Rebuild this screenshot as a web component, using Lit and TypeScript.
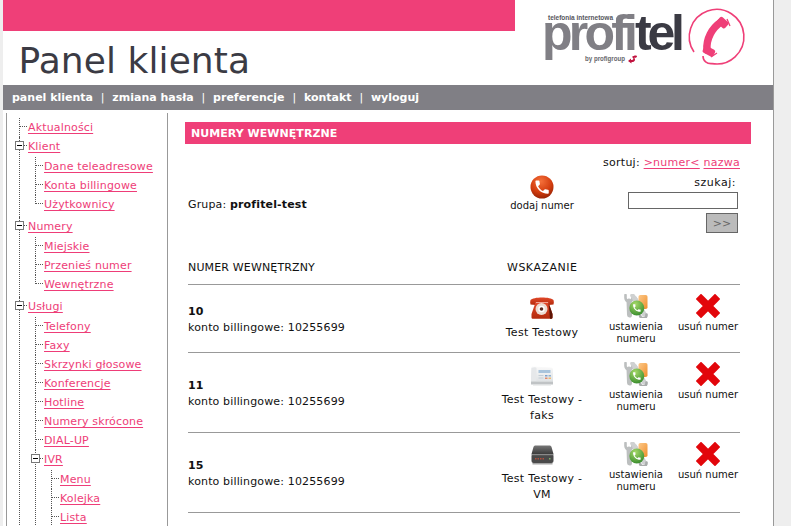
import { LitElement, html, css } from "lit";
import { customElement } from "lit/decorators.js";

const HANDSET = "M6.62 10.79c1.44 2.83 3.76 5.14 6.59 6.59l2.2-2.2c.27-.27.67-.36 1.02-.24 1.12.37 2.33.57 3.57.57.55 0 1 .45 1 1V20c0 .55-.45 1-1 1-9.39 0-17-7.61-17-17 0-.55.45-1 1-1h3.5c.55 0 1 .45 1 1 0 1.25.2 2.45.57 3.57.11.35.03.74-.25 1.02l-2.2 2.2z";

const iconCall = html`<svg width="24" height="24" viewBox="0 0 24 24">
  <defs><radialGradient id="cg" cx="45%" cy="25%" r="80%"><stop offset="0" stop-color="#f5703a"/><stop offset=".6" stop-color="#d23c0e"/><stop offset="1" stop-color="#8f2004"/></radialGradient></defs>
  <circle cx="12" cy="12" r="11.5" fill="url(#cg)"/>
  <path d="${HANDSET}" transform="translate(3.2 3.2) scale(.74)" fill="#fff"/>
</svg>`;

const iconRedPhone = html`<svg width="24" height="23" viewBox="0 0 24 23">
  <defs><linearGradient id="rg" x1="0" y1="0" x2="0" y2="1"><stop offset="0" stop-color="#e2492a"/><stop offset="1" stop-color="#b32a0c"/></linearGradient></defs>
  <path d="M.5 4C3 .5 21 .5 23.500 4c.5 1.500.5 3 0 4.500l-5 .5-.5-3H6l-.5 3-5-.5C0 7 0 5.500.5 4z" fill="url(#rg)"/>
  <path d="M5.500 6.500h13l4 11.500v3.500c0 .8-.7 1.300-1.500 1.300H3c-.8 0-1.500-.5-1.500-1.300V18z" fill="url(#rg)"/>
  <path d="M18.500 6.500l4 11.500v3.500c0 .8-.7 1.300-1.500 1.300h-1z" fill="#5c1405"/>
  <circle cx="11.500" cy="13" r="6" fill="#ecdcd2"/><circle cx="11.500" cy="13" r="3.200" fill="#fff"/><circle cx="11.500" cy="13" r="1.800" fill="#5a2a20"/>
</svg>`;

const iconFax = html`<svg width="24" height="21" viewBox="0 0 24 21">
  <defs><linearGradient id="fg" x1="0" y1="0" x2="0" y2="1"><stop offset="0" stop-color="#fafafa"/><stop offset="1" stop-color="#dfe2e4"/></linearGradient></defs>
  <path d="M1 3.500C1 2 2 1.500 3 1.500l18 1c1 0 2 1 2 2v12H1z" fill="url(#fg)"/>
  <path d="M1.500 3C4 2 6 2 6.500 3v13.500h-5.500z" fill="#e6e8ea"/>
  <rect x="8.500" y="5" width="12" height="3" fill="#a9c4dc"/>
  <path d="M8.500 10h5v1h-5zm0 2.500h5v1h-5z" fill="#c3cdd6"/>
  <path d="M15 10h2.500v1.500H15z" fill="#7aa0cc"/><path d="M18.500 10H21v1.500h-2.500z" fill="#90b0d0"/>
  <path d="M15 12.500h2.500V14H15z" fill="#e08a70"/><path d="M18.500 12.500H21V14h-2.500z" fill="#eebb70"/>
  <rect x="1" y="16.500" width="22" height="3" fill="#c0c3c5"/><rect x="3" y="19.500" width="18" height="1" fill="#dedfe0"/>
</svg>`;

const iconVm = html`<svg width="23" height="20" viewBox="0 0 23 20">
  <defs><linearGradient id="vg" x1="0" y1="0" x2="0" y2="1"><stop offset="0" stop-color="#777"/><stop offset="1" stop-color="#3c3c3c"/></linearGradient></defs>
  <path d="M4.500 .5h14c1 0 1.500.5 2 1.500L22.500 9h-22L2.500 2c.5-1 1-1.500 2-1.500z" fill="url(#vg)"/>
  <rect x=".5" y="9" width="22" height="9" rx="2" fill="#4a4a4a"/>
  <rect x=".5" y="9" width="22" height="1.200" fill="#8a8a8a"/>
  <path d="M4 13h1.500v1.500H4zm2.500 0H8v1.500H6.500zm2.500 0h1.500v1.500H9zm2.500 0H13v1.500h-1.500z" fill="#b0503f"/><rect x="18" y="13" width="1.500" height="1.500" fill="#7fae6a"/>
  <rect x="1.500" y="18" width="20" height="1.500" fill="#a5a5a5"/>
</svg>`;

const iconSettings = html`<svg width="24" height="24" viewBox="0 0 24 24">
  <defs>
    <linearGradient id="og" x1="0" y1="0" x2="1" y2="1"><stop offset="0" stop-color="#fcc98a"/><stop offset="1" stop-color="#f08e2a"/></linearGradient>
    <radialGradient id="sg" cx="40%" cy="25%" r="80%"><stop offset="0" stop-color="#a6d968"/><stop offset="1" stop-color="#358a2c"/></radialGradient>
  </defs>
  <g fill="none" stroke="#bcbfbf" stroke-linecap="round">
    <path d="M1.500 1v3a3.500 3.500 0 0 0 7 0V1" stroke-width="2.600"/>
    <path d="M5 7l.5 14" stroke-width="5"/>
    <path d="M8.500 1.500l3 4" stroke-width="4.500" stroke="#cfd1d1"/>
    <path d="M11 5l9 15" stroke-width="5" stroke="#cfd1d1"/>
    <path d="M16 21.500a3 3 0 0 0 6.500-1" stroke-width="2.600" stroke="#a9acac"/>
  </g>
  <rect x="14.500" y="1" width="9" height="14" rx="1.800" fill="url(#og)"/>
  <circle cx="12.800" cy="14" r="7.500" fill="url(#sg)"/>
  <path d="${HANDSET}" transform="translate(7.800 9) scale(.42)" fill="#fff"/>
</svg>`;

const iconX = html`<svg width="24" height="24" viewBox="0 0 24 24">
  <path d="M5 5l14 14M19 5L5 19" stroke="#e2060b" stroke-width="7.500" stroke-linecap="square" fill="none"/>
</svg>`;

const logo = html`<svg class="logo" width="258" height="85" viewBox="515 0 258 85">
  <text x="548" y="20" class="lt" textLength="65" lengthAdjust="spacingAndGlyphs">telefonia internetowa</text>
  <text x="542" y="50" class="lp" textLength="96" lengthAdjust="spacing">profi</text>
  <text x="635" y="50" class="ld" textLength="50" lengthAdjust="spacing">tel</text>
  <text x="585" y="61" class="lb" textLength="40" lengthAdjust="spacingAndGlyphs">by profigroup</text>
  <path d="M628 61l3-2.500v1.500c3 0 3-1.500 1-3 2-2 5-2 5-.5-.5 1.500-2 1.500-3 1 2 2 1 5-2.500 4.500v1.500z" fill="#c1133f"/>
  <path d="M694 52A27.300 27.300 0 1 1 712 63.600C707 64 703 61 703 56" fill="none" stroke="#ef3f78" stroke-width="1.600"/>
  <g fill="#ef3f78">
    <path d="M721 22C712 28 706 39 707 50" fill="none" stroke="#ef3f78" stroke-width="7.500" stroke-linecap="round"/>
    <rect x="-6" y="-4" width="11" height="8" rx="2" transform="translate(723 23) rotate(42)"/>
    <rect x="-6" y="-3.500" width="12" height="7.500" rx="2" transform="translate(709 51) rotate(28)"/>
  </g>
  <path d="M727 19l3 7M711 57l6-4" stroke="#ef3f78" stroke-width="1.300" fill="none"/>
</svg>`;

interface TreeNode { label: string; children?: TreeNode[]; more?: boolean }

const TREE: TreeNode[] = [
  { label: "Aktualności" },
  { label: "Klient", children: [{ label: "Dane teleadresowe" }, { label: "Konta billingowe" }, { label: "Użytkownicy" }] },
  { label: "Numery", children: [{ label: "Miejskie" }, { label: "Przenieś numer" }, { label: "Wewnętrzne" }] },
  { label: "Usługi", more: true, children: [
    { label: "Telefony" }, { label: "Faxy" }, { label: "Skrzynki głosowe" }, { label: "Konferencje" },
    { label: "Hotline" }, { label: "Numery skrócone" }, { label: "DIAL-UP" },
    { label: "IVR", more: true, children: [{ label: "Menu" }, { label: "Kolejka" }, { label: "Lista" }] },
  ] },
];

const ROWS = [
  { num: "10", icon: iconRedPhone, target: "Test Testowy" },
  { num: "11", icon: iconFax, target: "Test Testowy - faks" },
  { num: "15", icon: iconVm, target: "Test Testowy - VM" },
];

@customElement("app-root")
export class AppRoot extends LitElement {
  static styles = css`
    :host { display: block; height: 526px; overflow: hidden; background: #eee;
      font: 11px/16px "DejaVu Sans", Verdana, sans-serif; letter-spacing: .15px; color: #111; }
    .page { margin-left: 3px; width: 770px; min-height: 526px; background: #fff; border-right: 1px solid #999; }
    a { color: #ee3d78; text-decoration: underline; text-underline-offset: 2px; }

    .head { display: flex; height: 85px; }
    .head-left { flex: 1; }
    .pink { height: 31px; background: #ef3f78; }
    h1 { margin: 0; padding: 8px 0 0 15.500px; font: 400 36px/44px "DejaVu Sans", sans-serif; letter-spacing: .08px; color: #3b3b44; }
    .logo { display: block; flex: none; }
    .lt { font: 700 7px "Liberation Sans", sans-serif; fill: #55555c; letter-spacing: 0; }
    .lp { font: 700 50px "Liberation Sans", sans-serif; fill: #807f85; letter-spacing: 0; }
    .ld { font: 700 50px "Liberation Sans", sans-serif; fill: #3b3b44; letter-spacing: 0; }
    .lb { font: 700 7px "Liberation Sans", sans-serif; fill: #66666c; letter-spacing: 0; }

    nav { height: 25px; background: #807f85; display: flex; align-items: center; gap: 7.800px; padding-left: 9px;
      color: #fff; font-weight: 700; font-size: 11px; letter-spacing: 0; }
    nav .sep { font-weight: 400; }

    .body { display: flex; align-items: flex-start; }
    .side { width: 162px; margin: 3px 0 0 3px; box-sizing: border-box; border: solid #999; border-width: 0 1px;
      padding: 5px 0 0 12px; height: 420px; flex: none; }
    ul { list-style: none; margin: 0; padding: 0; }
    li { position: relative; padding-left: 9px; }
    li::before { content: ""; position: absolute; left: 0; top: 8px; width: 8px; border-top: 1px dotted #555; }
    li::after { content: ""; position: absolute; left: 0; top: 0; bottom: 0; border-left: 1px dotted #555; }
    li.last::after { bottom: auto; height: 9px; }
    ul ul { margin-left: 7px; padding-top: 1px; padding-bottom: 3px; }
    ul ul.open { padding-bottom: 0; }
    .row { display: block; height: 19px; line-height: 19px; white-space: nowrap; }
    .box { position: absolute; z-index: 1; left: -4px; top: 4px; width: 7px; height: 7px; border: 1px solid #777; background: #fff; }
    .box::after { content: ""; position: absolute; left: 1px; right: 1px; top: 3px; height: 1px; background: #000; }

    main { flex: 1; padding: 12px 22px 0 17px; }
    h2 { margin: 0; height: 22px; background: #ef3f78; color: #fff; font: 700 11px/23px "DejaVu Sans", sans-serif; padding-left: 6px; text-transform: uppercase; letter-spacing: .05px; }
    .content { width: 552px; margin-left: 3px; }
    .tools { display: grid; grid-template-columns: 300px 108px 144px; align-items: center; padding-top: 11px; height: 78px; }
    .group { padding-top: 22px; }
    .dodaj { text-align: center; }
    .dodaj svg, .cell svg { display: block; margin: 0 auto; }
    .dodaj span { display: block; font-size: 10px; line-height: 14px; letter-spacing: 0; }
    .search { text-align: right; white-space: nowrap; }
    .search .sort { height: 16px; line-height: 16px; letter-spacing: .25px; }
    .search .lab { margin-top: 4px; margin-right: 4px; line-height: 16px; letter-spacing: .5px; }
    .search input { display: block; box-sizing: border-box; width: 110px; height: 17px; margin: 1px 2px 0 auto; border: 1px solid #666; padding: 0; background: #fff; }
    .search button { display: block; box-sizing: border-box; width: 32px; height: 20px; margin: 4px 2px 0 auto; padding: 0;
      background: #bbb; border: 1px solid #666; color: #666; font: 11px "DejaVu Sans", sans-serif; }
    .thead { display: grid; grid-template-columns: 300px 252px; padding-top: 27px; height: 16px; line-height: 16px; padding-bottom: 8px; border-bottom: 1px solid #999; }
    .thead span:last-child { padding-left: 19px; letter-spacing: .5px; }
    .tr { display: grid; grid-template-columns: 300px 108px 80px 64px; border-bottom: 1px solid #999; align-items: center; }
    .tr.a { height: 67px; }
    .tr.b { height: 79px; }
    .tr.b .cell { padding-top: 3px; }
    .num { padding-top: 3px; }
    .num b { display: block; }
    .cell { text-align: center; padding: 0 10px; letter-spacing: .3px; }
    .cell span { display: block; margin-top: 6px; }
    .act { align-self: start; padding-top: 9px; text-align: center; font-size: 10px; line-height: 12px; letter-spacing: 0; }
    .act svg { display: block; margin: 0 auto 3px; }
  `;

  private node(n: TreeNode, last: boolean, level: number): unknown {
    return html`<li class=${last ? "last" : ""}>
      ${n.children ? html`<span class="box"></span>` : ""}
      <span class="row"><a href="#">${n.label}</a></span>
      ${n.children ? this.list(n.children, level + 1, !!n.more) : ""}
    </li>`;
  }

  private list(items: TreeNode[], level: number, open: boolean): unknown {
    return html`<ul class=${open ? "open" : ""}>${items.map((n, i) =>
      this.node(n, level > 1 && !open && i === items.length - 1, level))}</ul>`;
  }

  render() {
    return html`<div class="page">
      <header class="head">
        <div class="head-left"><div class="pink"></div><h1>Panel klienta</h1></div>
        ${logo}
      </header>
      <nav>
        <span>panel klienta</span><span class="sep">|</span>
        <span>zmiana hasła</span><span class="sep">|</span>
        <span>preferencje</span><span class="sep">|</span>
        <span>kontakt</span><span class="sep">|</span>
        <span>wyloguj</span>
      </nav>
      <div class="body">
        <aside class="side">${this.list(TREE, 1, false)}</aside>
        <main>
          <h2>Numery wewnętrzne</h2>
          <div class="content">
            <div class="tools">
              <div class="group">Grupa: <b>profitel-test</b></div>
              <div class="dodaj">${iconCall}<span>dodaj numer</span></div>
              <div class="search">
                <div class="sort">sortuj: <a href="#">&gt;numer&lt;</a> <a href="#">nazwa</a></div>
                <div class="lab">szukaj:</div>
                <input type="text" />
                <button>&gt;&gt;</button>
              </div>
            </div>
            <div class="thead"><span>NUMER WEWNĘTRZNY</span><span>WSKAZANIE</span></div>
            ${ROWS.map((r, i) => html`<div class="tr ${i === 0 ? "a" : "b"}">
              <div class="num"><b>${r.num}</b>konto billingowe: 10255699</div>
              <div class="cell">${r.icon}<span>${r.target}</span></div>
              <div class="act">${iconSettings}ustawienia numeru</div>
              <div class="act">${iconX}usuń numer</div>
            </div>`)}
          </div>
        </main>
      </div>
    </div>`;
  }
}
